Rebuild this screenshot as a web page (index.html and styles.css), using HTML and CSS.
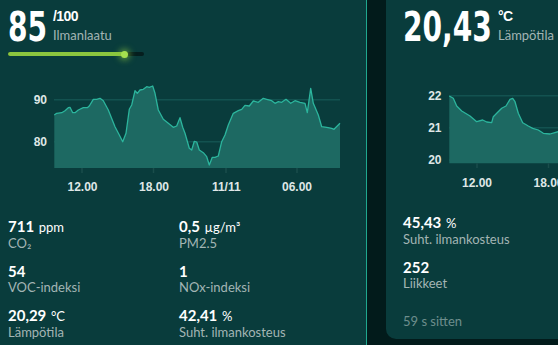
FILE: index.html
```html
<!DOCTYPE html>
<html lang="fi">
<head>
  <meta charset="UTF-8">
  <title>Sisäilma</title>
  <link rel="stylesheet" href="styles.css">
</head>
<body>
  <div class="dashboard">

    <!-- ilmanlaatu -->
    <div class="card card-air">
      <div class="reading">
        <div class="big-value score-value">85</div>
        <div class="reading-side">
          <div class="reading-unit">/100</div>
          <div class="reading-name">Ilmanlaatu</div>
        </div>
      </div>
      <div class="score-bar"><div class="score-fill" style="width: 117px"></div></div>

      <svg class="chart" width="366" height="144" viewBox="0 56 366 144">
        <line class="grid" x1="54" y1="99.7" x2="340" y2="99.7"/>
        <line class="grid" x1="54" y1="141.7" x2="340" y2="141.7"/>
        <path class="area" d="M54.3,168 L54.3,115 56.7,113.3 61.7,112.7 65,110.7 68.3,107.7 70,107.3 72.7,112.7 75,112.7 78.3,110 83.3,107.7 87.3,107.7 89.3,106 93.3,99.3 96.7,99.3 100,98.3 103.3,100.7 108.3,110 115,126.7 119.3,135 122.7,141.7 126,133.3 129.3,109.3 131.7,105 135,90.7 137.3,93.3 140,90 143.3,89.3 146.7,86.7 149.3,87.3 152.7,86 155,93.3 158.3,110 163.3,119.3 168.3,123.3 173.3,127.3 176.7,126 180,117.7 182.7,127.3 185,133.3 189.3,148.3 191.7,150 194.3,141.3 196.7,142 199.3,150 203.3,152.7 206.7,156.7 209.3,165 212.3,157.3 215,157.3 218.3,156 221.7,141.7 225,135 228.3,125 233.3,113.3 238.3,110.7 241.7,109.3 245,105.3 249.3,106 253.3,101 258.3,102.3 263.3,98.3 266.7,99.3 271.7,100.7 275,103.3 278.3,101.7 281.7,102.3 286,99.3 290.7,103.3 295,100.7 300,102.3 305,103.3 307.3,112.7 310.7,88.3 313.3,103.3 318.3,115 321.7,126.7 326.7,127.3 331.7,128.3 334,129.3 340,123.3 L340,168 Z"/>
        <polyline class="line" points="54.3,115 56.7,113.3 61.7,112.7 65,110.7 68.3,107.7 70,107.3 72.7,112.7 75,112.7 78.3,110 83.3,107.7 87.3,107.7 89.3,106 93.3,99.3 96.7,99.3 100,98.3 103.3,100.7 108.3,110 115,126.7 119.3,135 122.7,141.7 126,133.3 129.3,109.3 131.7,105 135,90.7 137.3,93.3 140,90 143.3,89.3 146.7,86.7 149.3,87.3 152.7,86 155,93.3 158.3,110 163.3,119.3 168.3,123.3 173.3,127.3 176.7,126 180,117.7 182.7,127.3 185,133.3 189.3,148.3 191.7,150 194.3,141.3 196.7,142 199.3,150 203.3,152.7 206.7,156.7 209.3,165 212.3,157.3 215,157.3 218.3,156 221.7,141.7 225,135 228.3,125 233.3,113.3 238.3,110.7 241.7,109.3 245,105.3 249.3,106 253.3,101 258.3,102.3 263.3,98.3 266.7,99.3 271.7,100.7 275,103.3 278.3,101.7 281.7,102.3 286,99.3 290.7,103.3 295,100.7 300,102.3 305,103.3 307.3,112.7 310.7,88.3 313.3,103.3 318.3,115 321.7,126.7 326.7,127.3 331.7,128.3 334,129.3 340,123.3"/>
        <line class="tick" x1="82" y1="168" x2="82" y2="173"/>
        <line class="tick" x1="153.5" y1="168" x2="153.5" y2="173"/>
        <line class="tick" x1="226" y1="168" x2="226" y2="173"/>
        <line class="tick" x1="297" y1="168" x2="297" y2="173"/>
        <text class="axis" x="47" y="103.5" text-anchor="end">90</text>
        <text class="axis" x="47" y="145.5" text-anchor="end">80</text>
        <text class="axis" x="82.5" y="191" text-anchor="middle">12.00</text>
        <text class="axis" x="154" y="191" text-anchor="middle">18.00</text>
        <text class="axis" x="226.3" y="191" text-anchor="middle">11/11</text>
        <text class="axis" x="297" y="191" text-anchor="middle">06.00</text>
      </svg>

      <div class="stats stats-two">
        <div class="stat">
          <div class="stat-value">711 <span class="unit">ppm</span></div>
          <div class="stat-label">CO₂</div>
        </div>
        <div class="stat">
          <div class="stat-value">0,5 <span class="unit">µg/m³</span></div>
          <div class="stat-label">PM2.5</div>
        </div>
        <div class="stat">
          <div class="stat-value">54</div>
          <div class="stat-label">VOC-indeksi</div>
        </div>
        <div class="stat">
          <div class="stat-value">1</div>
          <div class="stat-label">NOx-indeksi</div>
        </div>
        <div class="stat">
          <div class="stat-value">20,29 <span class="unit">°C</span></div>
          <div class="stat-label">Lämpötila</div>
        </div>
        <div class="stat">
          <div class="stat-value">42,41 <span class="unit">%</span></div>
          <div class="stat-label">Suht. ilmankosteus</div>
        </div>
      </div>
    </div>

    <!-- lämpötila -->
    <div class="card card-climate">
      <div class="reading reading-wide">
        <div class="big-value temp-value">20,43</div>
        <div class="reading-side">
          <div class="reading-unit">°C</div>
          <div class="reading-name">Lämpötila</div>
        </div>
      </div>

      <svg class="chart" width="200" height="153" viewBox="386 47 200 153">
        <line class="grid" x1="449" y1="95.7" x2="586" y2="95.7"/>
        <line class="grid" x1="449" y1="127.7" x2="586" y2="127.7"/>
        <line class="grid" x1="449" y1="160" x2="586" y2="160"/>
        <path class="area" d="M449.3,163.3 L449.3,96 453.3,98.3 456.7,106 461.7,111 470,116 476.7,121.7 482.7,120 486.7,122 491.7,122.7 493.3,116.7 496.7,113.3 501.7,108.3 506,106 510,99.3 512.7,98.3 515,101.7 518.3,113.3 522.7,122.7 528.3,126 532.7,128.3 538.3,130 543.3,133.3 550,134 558,131.7 570,131 586,130 L586,163.3 Z"/>
        <polyline class="line" points="449.3,96 453.3,98.3 456.7,106 461.7,111 470,116 476.7,121.7 482.7,120 486.7,122 491.7,122.7 493.3,116.7 496.7,113.3 501.7,108.3 506,106 510,99.3 512.7,98.3 515,101.7 518.3,113.3 522.7,122.7 528.3,126 532.7,128.3 538.3,130 543.3,133.3 550,134 558,131.7 570,131 586,130"/>
        <line class="tick" x1="477" y1="163.3" x2="477" y2="168"/>
        <line class="tick" x1="548.5" y1="163.3" x2="548.5" y2="168"/>
        <text class="axis" x="441.5" y="99.5" text-anchor="end">22</text>
        <text class="axis" x="441.5" y="131.5" text-anchor="end">21</text>
        <text class="axis" x="441.5" y="163.5" text-anchor="end">20</text>
        <text class="axis" x="477" y="186.5" text-anchor="middle">12.00</text>
        <text class="axis" x="548.5" y="186.5" text-anchor="middle">18.00</text>
      </svg>

      <div class="stats stats-one">
        <div class="stat">
          <div class="stat-value">45,43 <span class="unit">%</span></div>
          <div class="stat-label">Suht. ilmankosteus</div>
        </div>
        <div class="stat">
          <div class="stat-value">252</div>
          <div class="stat-label">Liikkeet</div>
        </div>
      </div>
      <div class="updated">59 s sitten</div>
    </div>

  </div>
</body>
</html>
```

FILE: styles.css
```css
html, body { margin: 0; overflow: hidden; }
body {
  background-color: #021b1b;
  color: #fff;
  font-family: Lato, "Noto Sans", sans-serif;
}

.dashboard {
  display: flex;
  gap: 19px;
  width: 586px;
  height: 345px;
}

.card { background-color: #093c3c; flex: none; }
.card-air {
  width: 366px;
  height: 345px;
  border-right: 1px solid #1fa88f;
}
.card-climate {
  width: 200px;
  height: 339px;
  border-radius: 0 0 10px 10px;
}

/* big reading at the top of each card */
.reading {
  display: flex;
  align-items: flex-start;
  gap: 6px;
  padding: 7px 8px 0;
}
.reading-wide { padding-left: 17px; }
/* no narrow font installed, so squeeze the condensed one */
.big-value {
  font-family: "DejaVu Sans Condensed", "DejaVu Sans", sans-serif;
  font-weight: bold;
  font-size: 40px;
  line-height: 40px;
  white-space: nowrap;
  transform: scaleX(0.78);
  transform-origin: 0 0;
}
.score-value { width: 39px; }
.temp-value { width: 89px; }
.reading-side {
  display: flex;
  flex-direction: column;
  padding-top: 2px;
}
.reading-unit {
  font-family: "Liberation Sans", Arial, sans-serif;
  font-weight: bold;
  font-size: 14px;
  line-height: 14px;
  letter-spacing: -0.6px;
}
.reading-name {
  margin-top: 5px;
  font-size: 13px;
  line-height: 15px;
  color: #a3b5b4;
}

.score-bar {
  position: relative;
  margin: 5px 0 0 8px;
  width: 136px;
  height: 4px;
  border-radius: 2px;
  background-color: #051e1e;
}
.score-fill {
  position: relative;
  height: 4px;
  border-radius: 2px;
  background-color: #8cc63f;
}
.score-fill::after {
  content: "";
  position: absolute;
  right: -3px;
  top: -1.5px;
  width: 7px;
  height: 7px;
  border-radius: 50%;
  background-color: #a6e04f;
  box-shadow: 0 0 6px 2px rgba(140, 198, 63, 0.65);
}

/* charts */
.chart { display: block; }
.chart .grid { stroke: #135250; stroke-width: 1.5; }
.chart .area { fill: #1d6962; }
.chart .line { fill: none; stroke: #2cb59d; stroke-width: 1.3; stroke-linejoin: round; }
.chart .tick { stroke: #1a4d4b; stroke-width: 1.5; }
.chart .axis {
  font-family: "Liberation Sans", Arial, sans-serif;
  font-weight: bold;
  font-size: 12px;
  fill: #dfe7e6;
}

/* stat list */
.stats { display: grid; row-gap: 11px; }
.stats-two {
  grid-template-columns: 171px 1fr;
  padding: 17px 0 0 8px;
}
.stats-one { padding: 13px 0 0 17px; }
.stat-value {
  font-weight: bold;
  font-size: 15px;
  line-height: 18px;
}
.stat-value .unit {
  font-weight: normal;
  font-size: 13px;
  margin-left: 1px;
}
.stat-label {
  font-size: 13px;
  line-height: 15px;
  color: #a3b5b4;
}
.updated {
  margin-top: 23px;
  padding-left: 17px;
  font-size: 13px;
  line-height: 15px;
  color: #6e8e8d;
}
```
